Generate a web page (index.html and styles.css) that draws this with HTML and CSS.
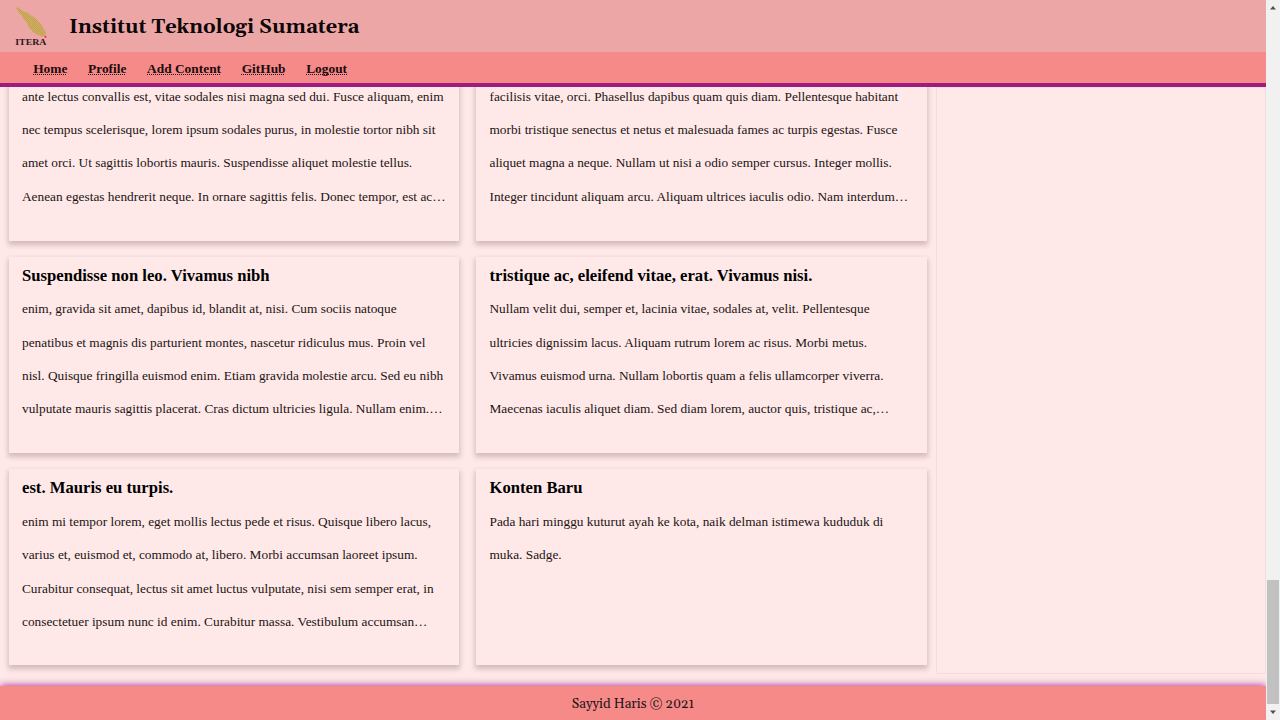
FILE: index.html
```html
<!DOCTYPE html>
<html lang="id">
<head>
<meta charset="utf-8">
<title>Institut Teknologi Sumatera</title>
<link rel="stylesheet" href="styles.css">
</head>
<body>
<div class="page">
  <header class="header">
    <div class="brand">
      <svg class="logo" viewBox="0 0 34 40" width="34" height="40">
        <defs><pattern id="weave" width="2" height="2" patternUnits="userSpaceOnUse"><rect width="2" height="2" fill="#d1ac66"/><rect width="1" height="1" fill="#c0a351"/><rect x="1" y="1" width="1" height="1" fill="#c6a44f"/></pattern></defs>
        <path d="M1.500 1L5 2L9 5L13 6.500L17 9.500L21 11.500L24 15L27 18L29 22L32 26.500L31.500 29.500L28 30.500L22 28L18 25L15 21.500L13 17L10 13.500L8 10L5 7Z" fill="url(#weave)"/>
        <circle cx="31.500" cy="30.800" r="1.100" fill="#e0403c"/>
        <text x="1.300" y="39.200" textLength="31" lengthAdjust="spacingAndGlyphs" class="logo-text">ITERA</text>
      </svg>
      <h1 class="title">Institut Teknologi Sumatera</h1>
    </div>
    <nav class="nav"><a>Home</a><a>Profile</a><a>Add Content</a><a>GitHub</a><a>Logout</a></nav>
  </header>
  <main class="main">
    <section class="cards">
      <article class="card card-continued"><p>ante lectus convallis est, vitae sodales nisi magna sed dui. Fusce aliquam, enim<br>nec tempus scelerisque, lorem ipsum sodales purus, in molestie tortor nibh sit<br>amet orci. Ut sagittis lobortis mauris. Suspendisse aliquet molestie tellus.<br>Aenean egestas hendrerit neque. In ornare sagittis felis. Donec tempor, est ac…</p></article>
      <article class="card card-continued"><p>facilisis vitae, orci. Phasellus dapibus quam quis diam. Pellentesque habitant<br>morbi tristique senectus et netus et malesuada fames ac turpis egestas. Fusce<br>aliquet magna a neque. Nullam ut nisi a odio semper cursus. Integer mollis.<br>Integer tincidunt aliquam arcu. Aliquam ultrices iaculis odio. Nam interdum…</p></article>
      <article class="card"><h2>Suspendisse non leo. Vivamus nibh</h2><p>enim, gravida sit amet, dapibus id, blandit at, nisi. Cum sociis natoque<br>penatibus et magnis dis parturient montes, nascetur ridiculus mus. Proin vel<br>nisl. Quisque fringilla euismod enim. Etiam gravida molestie arcu. Sed eu nibh<br>vulputate mauris sagittis placerat. Cras dictum ultricies ligula. Nullam enim.…</p></article>
      <article class="card"><h2>tristique ac, eleifend vitae, erat. Vivamus nisi.</h2><p>Nullam velit dui, semper et, lacinia vitae, sodales at, velit. Pellentesque<br>ultricies dignissim lacus. Aliquam rutrum lorem ac risus. Morbi metus.<br>Vivamus euismod urna. Nullam lobortis quam a felis ullamcorper viverra.<br>Maecenas iaculis aliquet diam. Sed diam lorem, auctor quis, tristique ac,…</p></article>
      <article class="card"><h2>est. Mauris eu turpis.</h2><p>enim mi tempor lorem, eget mollis lectus pede et risus. Quisque libero lacus,<br>varius et, euismod et, commodo at, libero. Morbi accumsan laoreet ipsum.<br>Curabitur consequat, lectus sit amet luctus vulputate, nisi sem semper erat, in<br>consectetuer ipsum nunc id enim. Curabitur massa. Vestibulum accumsan…</p></article>
      <article class="card"><h2>Konten Baru</h2><p>Pada hari minggu kuturut ayah ke kota, naik delman istimewa kududuk di<br>muka. Sadge.</p></article>
    </section>
    <aside class="aside"></aside>
  </main>
  <footer class="footer">Sayyid Haris © 2021</footer>
</div>
<div class="scrollbar">
  <svg width="14" height="14" viewBox="0 0 14 14"><path d="M4 9.500L7 6L10 9.500Z" fill="#505050"/></svg>
  <div class="thumb"></div>
  <svg width="14" height="14" viewBox="0 0 14 14"><path d="M4 4.500L10 4.500L7 8Z" fill="#505050"/></svg>
</div>
</body>
</html>
```
FILE: styles.css
```css
* { box-sizing: border-box; }
body { margin: 0; height: 720px; overflow: hidden; display: flex; background: #fee9e8; color: #1c1314; font-family: "Liberation Serif", "Times New Roman", serif; font-size: 13.333px; }
.page { width: 1266px; height: 720px; display: flex; flex-direction: column; }
.header { flex: none; position: relative; z-index: 2; border-bottom: 4px solid #9d1c80; background: #f58a88; }
.brand { height: 52px; display: flex; align-items: center; gap: 21px; padding: 0 0 0 14px; background: #eda6a6; }
.logo-text { font-family: "Liberation Serif", serif; font-weight: bold; font-size: 8.500px; fill: #2b1a1c; }
.title { margin: 2px 0 0; color: #0c0708; font: bold 20px/32px Georgia, Gelasio, "Liberation Serif", serif; white-space: nowrap; }
.nav { height: 31px; display: flex; gap: 20.600px; padding: 0 33.200px; line-height: 33px; font-size: 13.400px; font-weight: bold; color: #200c0d; }
.nav a { text-decoration: underline dotted 1.300px; text-underline-offset: 1px; text-decoration-skip-ink: none; }
.main { flex: 1; min-height: 0; display: flex; }
.cards { width: 936px; height: 638px; margin-top: -51.500px; padding: 9px 0 9px 8.667px; display: grid; grid-template-columns: 450.700px 450.700px; grid-auto-rows: 196px; column-gap: 16.800px; row-gap: 16.400px; flex: none; }
.card { background: #fee9e8; padding: 7.200px 13.333px 0; box-shadow: 0 3px 5px 1px rgba(70, 20, 30, .22); white-space: nowrap; }
.card-continued { padding-top: 30.700px; }
.card h2 { margin: 0; font-size: 16.667px; line-height: 24px; color: #000; }
.card p { margin: 4.400px 0 0; line-height: 33.333px; }
.aside { flex: 1; height: 587px; border: 1px solid #f3dcdc; }
.footer { flex: none; position: relative; height: 34px; padding-top: 2px; background: #f58a88; box-shadow: 0 0 8px #a01c90; text-align: center; font: 13.333px/34px Georgia, Gelasio, "Liberation Serif", serif; }
.scrollbar { position: relative; z-index: 3; width: 14px; height: 720px; background: #f1f1f1; display: flex; flex-direction: column; justify-content: flex-end; }
.scrollbar svg { flex: none; }
.scrollbar svg:first-child { margin-bottom: auto; }
.thumb { width: 12px; height: 124px; margin: 0 1px 2px; background: #c1c1c1; }
```
